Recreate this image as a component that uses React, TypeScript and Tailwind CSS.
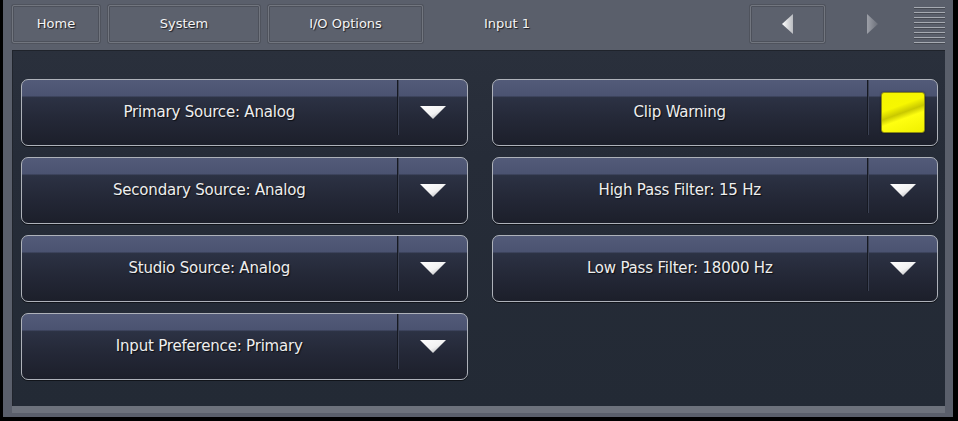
import React from "react";

const font = { fontFamily: '"DejaVu Sans", "Liberation Sans", sans-serif' };

function DownArrow() {
  return (
    <svg width="26" height="13" viewBox="0 0 26 13">
      <defs>
        <linearGradient id="da" x1="0" y1="0" x2="1" y2="1">
          <stop offset="0" stopColor="#ffffff" />
          <stop offset="0.55" stopColor="#f2f2f2" />
          <stop offset="1" stopColor="#9a9ca2" />
        </linearGradient>
      </defs>
      <polygon points="0,0 26,0 13,13" fill="url(#da)" />
    </svg>
  );
}

function Tab({ label, w }: { label: string; w: string }) {
  return (
    <div
      className={`${w} h-[38px] flex items-center justify-center rounded-[2px] border border-[#72767f] bg-[#5c616d] shadow-[inset_0_0_0_1px_#4d515b,0_0_0_1px_#4f535d] text-[13px] text-[#f4f4f4] [text-shadow:1px_1px_1px_#1a1c22]`}
    >
      {label}
    </div>
  );
}

function Row({ label, right }: { label: string; right?: React.ReactNode }) {
  return (
    <div className="h-[67px] flex rounded-[7px] border border-[#aeb2ba] overflow-hidden bg-[linear-gradient(180deg,#535b79_0%,#4b5371_24%,#2c3244_27%,#242837_60%,#1c1f2a_100%)] shadow-[0_1px_0_#11141a]">
      <div className="flex-1 flex items-center justify-center text-[15px] tracking-[-0.2px] text-[#eeeeee] [text-shadow:1px_1px_1px_#0c0e13]">
        {label}
      </div>
      <div className="w-[1px] bg-[#161922] mb-[10px]" />
      <div className="w-[1px] bg-[#3c4254] mb-[10px]" />
      <div className="w-[68px] flex items-center justify-center">
        {right ?? <DownArrow />}
      </div>
    </div>
  );
}

function ClipLight() {
  return (
    <div className="w-[44px] h-[41px] rounded-[3px] border border-[#8c8a10] bg-[linear-gradient(160deg,#f4f400_0%,#f7f700_35%,#c9c800_50%,#ffff10_62%,#f0f000_100%)] shadow-[0_0_2px_#00000088]" />
  );
}

export default function App() {
  return (
    <div className="w-[958px] h-[421px] bg-black pl-[3px] pr-[5px] pb-[4px]" style={font}>
      <div className="h-full bg-[#5a5f6b] flex flex-col">
        {/* top bar */}
        <div className="h-[50px] flex items-start pt-[5px] pl-[9px] pr-[8px]">
          <div className="flex gap-[8px]">
            <Tab label="Home" w="w-[88px]" />
            <Tab label="System" w="w-[152px]" />
            <Tab label="I/O Options" w="w-[155px]" />
          </div>
          <div className="w-[164px] h-[38px] flex items-center justify-center text-[13px] text-[#f4f4f4] [text-shadow:1px_1px_1px_#1a1c22] ml-[2px]">
            Input 1
          </div>
          <div className="flex-1" />
          <div className="w-[75px] h-[38px] flex items-center justify-center rounded-[2px] border border-[#72767f] bg-[#5c616d] shadow-[inset_0_0_0_1px_#4d515b,0_0_0_1px_#4f535d] mr-[41px]">
            <svg width="12" height="20" viewBox="0 0 12 20">
              <defs>
                <linearGradient id="la" x1="0" y1="0" x2="1" y2="0">
                  <stop offset="0" stopColor="#ffffff" />
                  <stop offset="1" stopColor="#b9bbc0" />
                </linearGradient>
              </defs>
              <polygon points="0,10 11,0 11,20" fill="url(#la)" />
            </svg>
          </div>
          <div className="h-[38px] flex items-center mr-[36px]">
            <svg width="12" height="20" viewBox="0 0 12 20">
              <defs>
                <linearGradient id="ra" x1="0" y1="0" x2="1" y2="0">
                  <stop offset="0" stopColor="#9da0a8" />
                  <stop offset="1" stopColor="#6b6f79" />
                </linearGradient>
              </defs>
              <polygon points="1,0 12,10 1,20" fill="url(#ra)" />
            </svg>
          </div>
          <div className="w-[31px] flex flex-col gap-[3px] pt-[2px]">
            {[0, 1, 2, 3, 4, 5, 6, 7].map((i) => (
              <div key={i} className="h-[2px] border-t border-[#a6aab2] border-b border-b-[#464a53]" />
            ))}
          </div>
        </div>

        {/* content panel */}
        <div className="ml-[9px] mr-[8px] h-[356px] bg-[linear-gradient(180deg,#2a303c_0%,#262c38_30%,#232a35_100%)] border-t border-[#1f232b] grid grid-cols-2 gap-x-[24px] pl-[9px] pr-[7px] pt-[28px] shadow-[inset_1px_0_0_#20242c]">
          <div className="flex flex-col gap-[11px]">
            <Row label="Primary Source: Analog" />
            <Row label="Secondary Source: Analog" />
            <Row label="Studio Source: Analog" />
            <Row label="Input Preference: Primary" />
          </div>
          <div className="flex flex-col gap-[11px]">
            <Row label="Clip Warning" right={<ClipLight />} />
            <Row label="High Pass Filter: 15 Hz" />
            <Row label="Low Pass Filter: 18000 Hz" />
          </div>
        </div>
        <div className="ml-[9px] mr-[8px] h-[7px] bg-[#6d727c]" />
      </div>
    </div>
  );
}
